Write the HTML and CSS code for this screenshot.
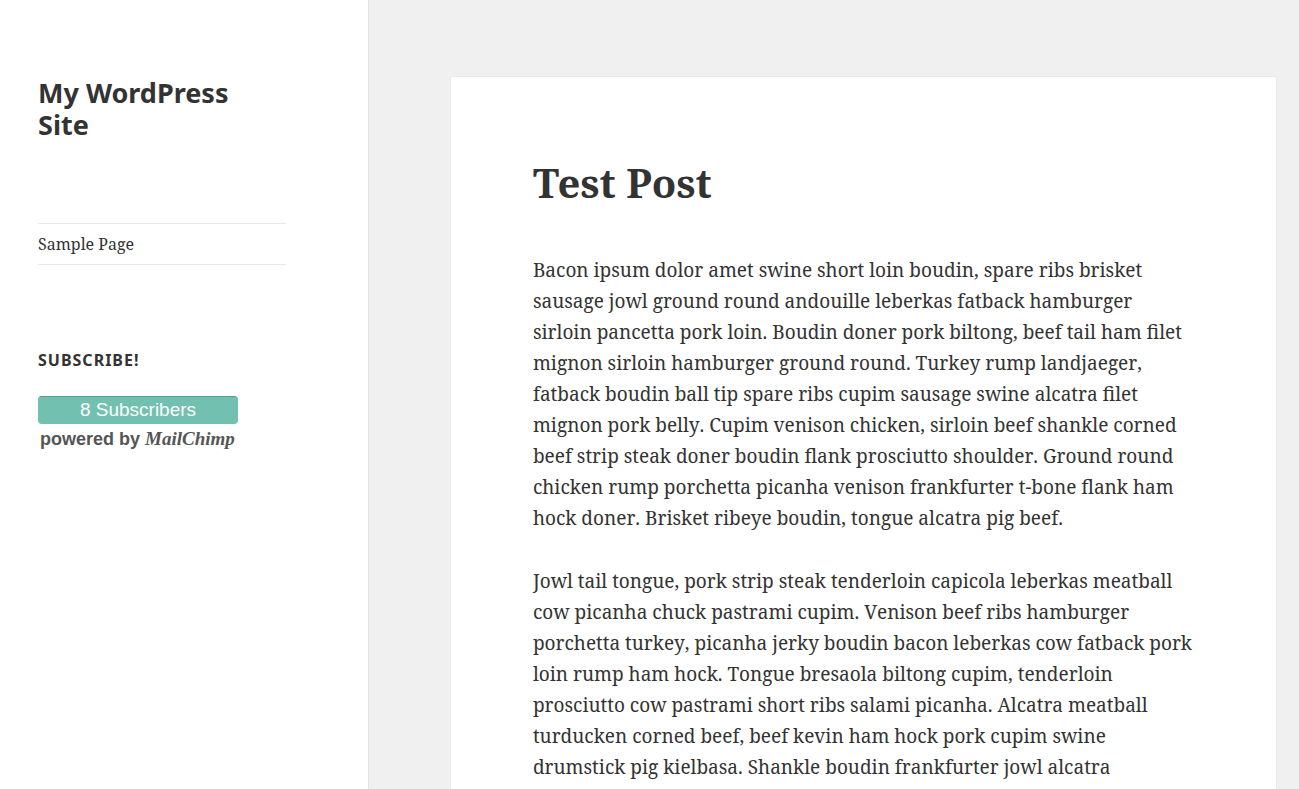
FILE: index.html
```html
<!DOCTYPE html>
<html lang="en">
<head>
<meta charset="utf-8">
<meta name="viewport" content="width=device-width, initial-scale=1">
<title>Test Post – My WordPress Site</title>
<link rel="stylesheet" href="styles.css">
</head>
<body>
<div class="site">
  <aside class="sidebar">
    <h1 class="site-title"><a href="#">My WordPress Site</a></h1>
    <nav class="site-nav">
      <ul class="nav-list">
        <li class="nav-item"><a href="#">Sample Page</a></li>
      </ul>
    </nav>
    <section class="widget">
      <h2 class="widget-title">Subscribe!</h2>
      <a class="badge" href="#">
        <span class="badge-count">8 Subscribers</span>
        <span class="badge-credit">powered by <span class="badge-brand">MailChimp</span></span>
      </a>
    </section>
  </aside>
  <main class="content">
    <article class="post">
      <h2 class="post-title">Test Post</h2>
      <p class="post-text">Bacon ipsum dolor amet swine short loin boudin, spare ribs brisket<br>
      sausage jowl ground round andouille leberkas fatback hamburger<br>
      sirloin pancetta pork loin. Boudin doner pork biltong, beef tail ham filet<br>
      mignon sirloin hamburger ground round. Turkey rump landjaeger,<br>
      fatback boudin ball tip spare ribs cupim sausage swine alcatra filet<br>
      mignon pork belly. Cupim venison chicken, sirloin beef shankle corned<br>
      beef strip steak doner boudin flank prosciutto shoulder. Ground round<br>
      chicken rump porchetta picanha venison frankfurter t-bone flank ham<br>
      hock doner. Brisket ribeye boudin, tongue alcatra pig beef.</p>
      <p class="post-text">Jowl tail tongue, pork strip steak tenderloin capicola leberkas meatball<br>
      cow picanha chuck pastrami cupim. Venison beef ribs hamburger<br>
      porchetta turkey, picanha jerky boudin bacon leberkas cow fatback pork<br>
      loin rump ham hock. Tongue bresaola biltong cupim, tenderloin<br>
      prosciutto cow pastrami short ribs salami picanha. Alcatra meatball<br>
      turducken corned beef, beef kevin ham hock pork cupim swine<br>
      drumstick pig kielbasa. Shankle boudin frankfurter jowl alcatra</p>
    </article>
  </main>
</div>
</body>
</html>
```
FILE: styles.css
```css
* {
  box-sizing: border-box;
  margin: 0;
}

body {
  background: #f0f0f0;
  color: #333;
  font-family: "Noto Serif", "DejaVu Serif", serif;
}

a {
  color: inherit;
  text-decoration: none;
}

.site {
  display: flex;
  height: 100vh;
  overflow: hidden;
}

.sidebar {
  flex: none;
  width: 28.4%;
  padding: 77px 82px 0 38px;
  background: #fff;
  border-right: 1px solid #e4e4e4;
}

.site-title {
  font: 700 27px/32px "Noto Sans", sans-serif;
}

.site-nav {
  margin-top: 82px;
}

.nav-list {
  padding: 0;
  list-style: none;
  border-top: 1px solid #e7e7e7;
  border-bottom: 1px solid #e7e7e7;
}

.nav-item {
  padding: 8px 0;
  font-size: 16px;
  line-height: 24px;
}

.widget {
  margin-top: 84px;
}

.widget-title {
  font: 700 16px/22px "Noto Sans", sans-serif;
  letter-spacing: 1px;
  text-transform: uppercase;
}

.badge {
  display: block;
  width: 200px;
  margin-top: 25px;
  font-family: "Liberation Sans", Arial, sans-serif;
  white-space: nowrap;
}

.badge-count {
  display: block;
  padding-bottom: 2px;
  border-top: 1px solid #4f9f8d;
  border-radius: 4px;
  background: #72c1b0;
  color: #fff;
  font-size: 19px;
  line-height: 25px;
  text-align: center;
}

.badge-credit {
  display: block;
  padding-left: 2px;
  color: #555;
  font-size: 18px;
  font-weight: 700;
  line-height: 30px;
}

.badge-brand {
  font-family: "Liberation Serif", serif;
  font-size: 19px;
  font-style: italic;
}

.content {
  flex: 1;
  min-width: 0;
  padding: 77px 23px 0 82px;
}

.post {
  min-height: 100%;
  padding: 82px;
  background: #fff;
  box-shadow: 0 0 1px rgba(0, 0, 0, 0.2);
}

.post-title {
  font-size: 40px;
  line-height: 48px;
}

.post-text {
  margin: 48px 0 32px;
  font-size: 19px;
  font-kerning: none;
  line-height: 31px;
}

.post-text + .post-text {
  margin-top: 0;
}
```
